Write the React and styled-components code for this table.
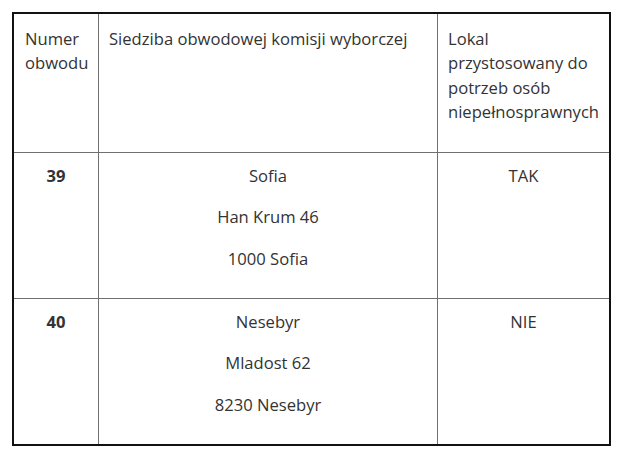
import React from "react";
import styled, { createGlobalStyle } from "styled-components";

const GlobalStyle = createGlobalStyle`
  html, body {
    margin: 0;
    padding: 0;
    background: #ffffff;
  }
  body {
    font-family: "Open Sans", "Liberation Sans", sans-serif;
    color: #333333;
  }
`;

const districts = [
  {
    number: "39",
    address: ["Sofia", "Han Krum 46", "1000 Sofia"],
    accessible: "TAK",
  },
  {
    number: "40",
    address: ["Nesebyr", "Mladost 62", "8230 Nesebyr"],
    accessible: "NIE",
  },
];

const Page = styled.div`
  padding: 12px;
`;

const Table = styled.table`
  border-collapse: separate;
  border-spacing: 0;
  table-layout: fixed;
  width: 599px;
  border: 2px solid #111111;
  font-size: 16.6px;
  line-height: 24.3px;
`;

const HeadCell = styled.th`
  height: 139px;
  padding: 13px ${(p) => (p.$last ? "4px" : "8px")} 0 ${(p) => (p.$first ? "11px" : "10px")};
  text-align: left;
  vertical-align: top;
  font-weight: 400;
  border-bottom: 1px solid #6f6f6f;
  border-right: ${(p) => (p.$last ? "none" : "1px solid #6f6f6f")};
  box-sizing: border-box;
`;

const Cell = styled.td`
  height: ${(p) => (p.$lastRow ? "145px" : "146px")};
  padding: 11px 8px 0;
  text-align: center;
  vertical-align: top;
  font-weight: ${(p) => (p.$bold ? 700 : 400)};
  border-bottom: ${(p) => (p.$lastRow ? "none" : "1px solid #6f6f6f")};
  border-right: ${(p) => (p.$last ? "none" : "1px solid #6f6f6f")};
  box-sizing: border-box;
`;

const Line = styled.p`
  margin: 0 0 17px;
`;

export default function App() {
  return (
    <>
      <GlobalStyle />
      <Page>
        <Table>
          <colgroup>
            <col style={{ width: 85 }} />
            <col style={{ width: 339 }} />
            <col style={{ width: 171 }} />
          </colgroup>
          <thead>
            <tr>
              <HeadCell $first>Numer obwodu</HeadCell>
              <HeadCell>Siedziba obwodowej komisji wyborczej</HeadCell>
              <HeadCell $last>Lokal przystosowany do potrzeb osób niepełnosprawnych</HeadCell>
            </tr>
          </thead>
          <tbody>
            {districts.map((d, i) => {
              const lastRow = i === districts.length - 1;
              return (
                <tr key={d.number}>
                  <Cell $bold $lastRow={lastRow}>{d.number}</Cell>
                  <Cell $lastRow={lastRow}>
                    {d.address.map((line) => (
                      <Line key={line}>{line}</Line>
                    ))}
                  </Cell>
                  <Cell $last $lastRow={lastRow}>{d.accessible}</Cell>
                </tr>
              );
            })}
          </tbody>
        </Table>
      </Page>
    </>
  );
}
